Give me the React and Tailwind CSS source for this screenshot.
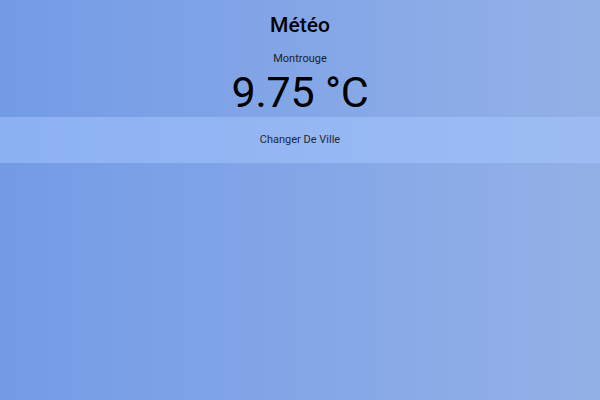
export default function App() {
  return (
    <div className="w-[600px] h-[400px] bg-gradient-to-r from-[#739be6] to-[#94b1e7] flex flex-col items-center" style={{ fontFamily: 'Roboto, sans-serif' }}>
      <h1 className="mt-[12px] text-[21px] font-medium leading-[26px] text-black">Météo</h1>
      <div className="mt-[14px] text-[11px] leading-[14px] text-[#222]">Montrouge</div>
      <div className="mt-[2px] text-[43px] leading-[49px] font-normal tracking-[-0.2px] text-black">9.75 °C</div>
      <button className="w-full h-[46px] bg-[#a6c8ff]/50 text-[11px] text-[#1f2937]">Changer De Ville</button>
    </div>
  );
}
